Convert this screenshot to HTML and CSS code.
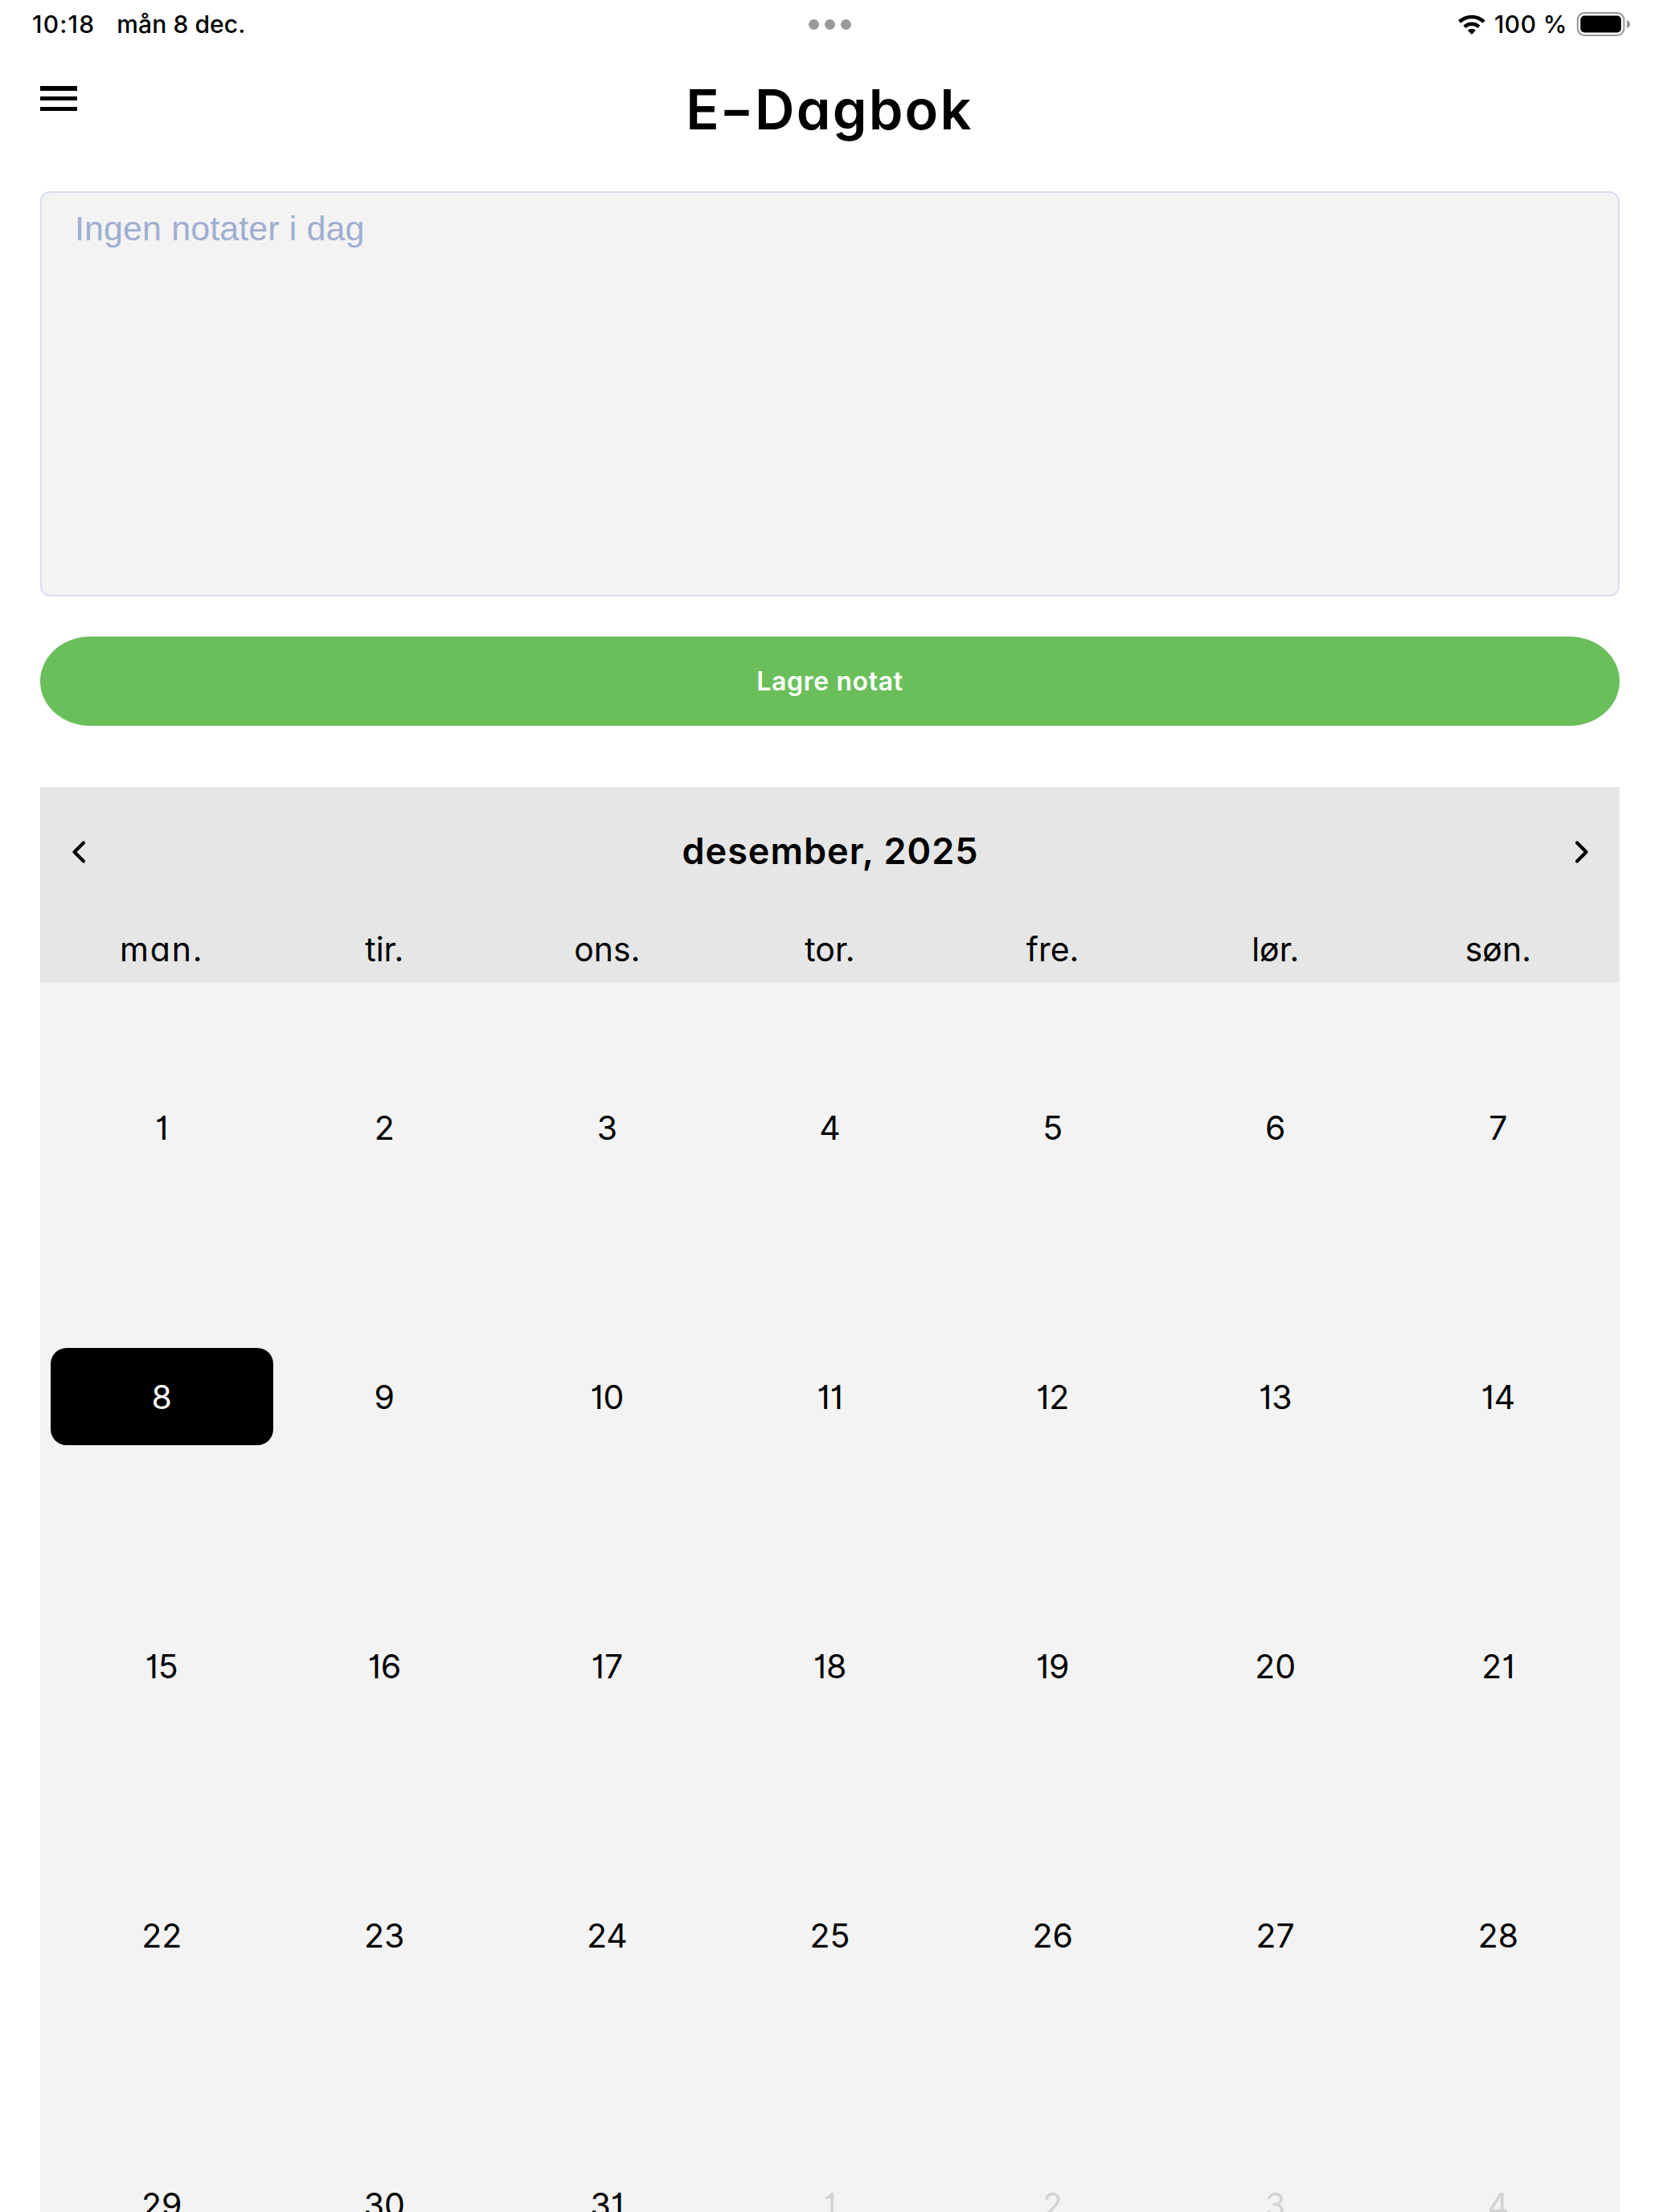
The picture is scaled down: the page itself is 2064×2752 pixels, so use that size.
FILE: index.html
```html
<!DOCTYPE html>
<html lang="nb">
<head>
    <meta charset="UTF-8">
    <meta name="viewport" content="width=device-width, initial-scale=1.0">
    <title>E-Dagbok</title>
    <link rel="stylesheet" href="styles.css">
</head>
<body>
    <div class="status-bar">
        <div class="status-left">
            <span class="clock">10:18</span>
            <span class="date">mån 8 dec.</span>
        </div>
        <div class="dots"><i></i><i></i><i></i></div>
        <div class="status-right">
            <svg class="wifi" width="36" height="27" viewBox="0 0 36 27">
                <path d="M1.2 8.6 A24 24 0 0 1 34.8 8.6 L31.6 11.8 A19.3 19.3 0 0 0 4.4 11.8 Z"/>
                <path d="M7.4 14.8 A15.2 15.2 0 0 1 28.6 14.8 L25.4 18 A10.6 10.6 0 0 0 10.6 18 Z"/>
                <path d="M13 20.8 A7.2 7.2 0 0 1 23 20.8 L18 26 Z"/>
            </svg>
            <span class="percent">100 %</span>
            <svg class="battery" width="68" height="32" viewBox="0 0 68 32">
                <rect x="1.8" y="2" width="57.6" height="28" rx="8.5" fill="none" stroke="#969696" stroke-width="2"/>
                <rect x="5.3" y="5.6" width="50.6" height="20.8" rx="5" fill="#000"/>
                <path d="M63 11 Q67 12.5 67 16 Q67 19.5 63 21 Z" fill="#969696"/>
            </svg>
        </div>
    </div>

    <header class="header">
        <button class="menu" aria-label="Meny"><i></i><i></i><i></i></button>
        <h1>E<span class="dash">-</span>Dagbok</h1>
    </header>

    <main class="container">
        <textarea class="note" placeholder="Ingen notater i dag"></textarea>
        <button class="save">Lagre notat</button>

        <section class="calendar">
            <div class="calendar-header">
                <div class="month">
                    <svg width="20" height="30" viewBox="0 0 20 30"><path d="M16 3.5 L4.5 15 L16 26.5"/></svg>
                    <h2>desember, 2025</h2>
                    <svg width="20" height="30" viewBox="0 0 20 30"><path d="M4 3.5 L15.5 15 L4 26.5"/></svg>
                </div>
                <div class="weekdays">
                    <span class="wide">man.</span>
                    <span>tir.</span>
                    <span>ons.</span>
                    <span>tor.</span>
                    <span>fre.</span>
                    <span>lør.</span>
                    <span>søn.</span>
                </div>
            </div>
            <div class="days">
                <div class="day">1</div>
                <div class="day">2</div>
                <div class="day">3</div>
                <div class="day">4</div>
                <div class="day">5</div>
                <div class="day">6</div>
                <div class="day">7</div>
                <div class="day selected">8</div>
                <div class="day">9</div>
                <div class="day">10</div>
                <div class="day">11</div>
                <div class="day">12</div>
                <div class="day">13</div>
                <div class="day">14</div>
                <div class="day">15</div>
                <div class="day">16</div>
                <div class="day">17</div>
                <div class="day">18</div>
                <div class="day">19</div>
                <div class="day">20</div>
                <div class="day">21</div>
                <div class="day">22</div>
                <div class="day">23</div>
                <div class="day">24</div>
                <div class="day">25</div>
                <div class="day">26</div>
                <div class="day">27</div>
                <div class="day">28</div>
                <div class="day">29</div>
                <div class="day">30</div>
                <div class="day">31</div>
                <div class="day outside">1</div>
                <div class="day outside">2</div>
                <div class="day outside">3</div>
                <div class="day outside">4</div>
            </div>
        </section>
    </main>
</body>
</html>
```
FILE: styles.css
```css
* {
    box-sizing: border-box;
}

body {
    margin: 0;
    height: 2752px;
    overflow: hidden;
    background-color: #fff;
    color: #000;
    font-family: Inter, "Liberation Sans", sans-serif;
}

button {
    border: none;
    padding: 0;
    font-family: inherit;
    cursor: pointer;
}

.status-bar {
    display: grid;
    grid-template-columns: 1fr auto 1fr;
    align-items: center;
    height: 60px;
    padding: 0 35px 0 40px;
    font-size: 30px;
    font-weight: 500;
    line-height: 60px;
}

.status-left, .status-right {
    display: flex;
    align-items: center;
}

.status-right {
    justify-content: flex-end;
}

.clock {
    letter-spacing: 1.2px;
}

.date {
    margin-left: 27px;
    letter-spacing: 0.1px;
}

.wifi {
    margin-right: 10px;
}

.percent {
    letter-spacing: 0.4px;
}

.battery {
    margin-left: 11px;
}

.dots {
    display: flex;
    gap: 7px;
    margin-right: 4px;
}

.dots i {
    width: 13px;
    height: 13px;
    border-radius: 50%;
    background-color: #999;
}

.header {
    display: grid;
    grid-template-columns: 46px 1fr 46px;
    height: 178px;
    padding: 0 50px;
}

.menu {
    display: flex;
    flex-direction: column;
    justify-content: space-between;
    height: 31px;
    margin-top: 47px;
    background: none;
}

.menu i {
    width: 46px;
    height: 5.5px;
    background-color: #000;
}

h1 {
    margin: 37px 0 0;
    font-size: 68.5px;
    font-weight: 600;
    line-height: 80px;
    letter-spacing: 2.2px;
    text-align: center;
    font-feature-settings: "cv11";
}

.dash {
    display: inline-block;
    margin: 0 4px;
    transform: scaleX(1.35);
}

.container {
    display: flex;
    flex-direction: column;
    padding: 0 49px 0 50px;
}

.note {
    display: block;
    height: 504px;
    padding: 18px 41px;
    border: 2px solid #d9dfef;
    border-radius: 12px;
    background-color: #f3f3f3;
    font-family: "Liberation Sans", Arial, sans-serif;
    font-size: 43px;
    line-height: 52px;
    letter-spacing: 0.1px;
    resize: none;
}

.note::placeholder {
    color: #a0aed0;
    opacity: 1;
}

.save {
    height: 111px;
    margin-top: 50px;
    border-radius: 62px / 55.5px;
    background-color: #6abf5b;
    color: #fff;
    font-size: 32px;
    font-weight: 600;
    letter-spacing: 0.6px;
}

.calendar {
    margin-top: 76px;
    background-color: #f3f3f3;
    font-feature-settings: "cv11", "cv01";
}

.calendar-header {
    height: 243px;
    background-color: #e6e6e6;
}

.month {
    display: flex;
    justify-content: space-between;
    align-items: center;
    height: 162px;
    padding: 0 37px 0 38px;
}

.month path {
    fill: none;
    stroke: #000;
    stroke-width: 4.2;
    stroke-linecap: round;
    stroke-linejoin: round;
}

h2 {
    margin: 0 0 2px;
    font-size: 45px;
    font-weight: 600;
    line-height: 60px;
    letter-spacing: 1px;
}

.weekdays, .days {
    display: grid;
    grid-template-columns: repeat(7, 1fr);
    padding: 0 12.6px;
    font-size: 41px;
    text-align: center;
}

.weekdays {
    line-height: 80px;
}

.weekdays .wide {
    letter-spacing: 1.8px;
}

.days {
    grid-auto-rows: 335px;
    align-items: center;
    padding-top: 13px;
}

.day {
    height: 121px;
    border-radius: 20px;
    line-height: 123px;
}

.day.selected {
    background-color: #000;
    color: #fff;
}

.day.outside {
    color: #d3d3d3;
}
```
